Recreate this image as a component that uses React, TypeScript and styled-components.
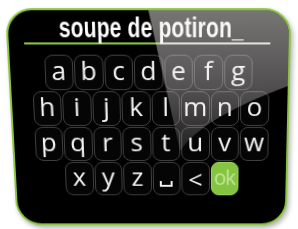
import styled, { createGlobalStyle } from "styled-components";

const GlobalStyle = createGlobalStyle`
  html, body {
    margin: 0;
    padding: 0;
    background: #fff;
    overflow: hidden;
  }
`;

const Stage = styled.div`
  width: 298px;
  height: 229px;
  padding: 10px 0 0 11px;
  box-sizing: border-box;
`;

const Panel = styled.div`
  position: relative;
  width: 278px;
  height: 220px;
  box-sizing: border-box;
  background: #000;
  border: 2px solid #8cc63f;
  border-radius: 26px;
  overflow: hidden;
  box-shadow: 2px 3px 5px rgba(0, 0, 0, 0.3);
  transform: perspective(600px) rotateX(-9.6deg) skewX(0.9deg);
  display: flex;
  flex-direction: column;
`;

const Title = styled.div`
  margin-top: 3.5px;
  height: 26px;
  padding-left: 6px;
  font-family: "Liberation Sans", Arial, sans-serif;
  font-weight: 700;
  font-size: 27px;
  line-height: 26px;
  color: #fff;
  text-align: center;
  white-space: nowrap;
`;

const TitleText = styled.span`
  display: inline-block;
  transform: scaleX(0.76);
  letter-spacing: 0.2px;
`;

const Underline = styled.div`
  margin: 1px 18px 0 15px;
  height: 2px;
  background: linear-gradient(to right, #8cc63f 0 133px, #d6d6d6 133px);
`;

const Keyboard = styled.div`
  margin-top: 10.5px;
  display: flex;
  flex-direction: column;
  gap: 1px;
`;

const Row = styled.div<{ $indent: number }>`
  display: flex;
  gap: 1px;
  padding-left: ${(p) => p.$indent}px;
`;

const Key = styled.div<{ $accent?: boolean; $low?: boolean }>`
  width: 28.5px;
  height: 35px;
  box-sizing: border-box;
  padding-bottom: ${(p) => (p.$low ? 0 : p.$accent ? 3 : 6)}px;
  border: 1.5px solid ${(p) => (p.$accent ? "#9fd45a" : "#404040")};
  border-radius: 8px;
  background: ${(p) => (p.$accent ? "#85c441" : "#050505")};
  color: ${(p) => (p.$accent ? "#c6e69c" : "#f4f4f4")};
  font-family: "Open Sans", "DejaVu Sans", sans-serif;
  font-size: ${(p) => (p.$accent ? 21 : 26)}px;
  letter-spacing: ${(p) => (p.$accent ? -1 : 0)}px;
  line-height: 1;
  display: flex;
  align-items: center;
  justify-content: center;
`;

const SpaceGlyph = styled.svg`
  width: 13px;
  height: 6px;
  margin-top: 16px;
`;

const Gloss = styled.svg`
  position: absolute;
  left: 0;
  top: 0;
  width: 274px;
  height: 216px;
  pointer-events: none;
`;

const rows: { indent: number; keys: string[] }[] = [
  { indent: 33.5, keys: ["a", "b", "c", "d", "e", "f", "g"] },
  { indent: 20.5, keys: ["h", "i", "j", "k", "l", "m", "n", "o"] },
  { indent: 20.5, keys: ["p", "q", "r", "s", "t", "u", "v", "w"] },
  { indent: 50, keys: ["x", "y", "z", "space", "<", "ok"] },
];

export default function App() {
  return (
    <>
      <GlobalStyle />
      <Stage>
        <Panel>
          <Title>
            <TitleText>soupe de potiron_</TitleText>
          </Title>
          <Underline />
          <Keyboard>
            {rows.map((row, i) => (
              <Row key={i} $indent={row.indent}>
                {row.keys.map((k) => (
                  <Key key={k} $accent={k === "ok"} $low={k === "<"}>
                    {k === "space" ? (
                      <SpaceGlyph viewBox="0 0 13 6">
                        <path d="M1 0 V5 H12 V0" fill="none" stroke="#f4f4f4" strokeWidth="2" />
                      </SpaceGlyph>
                    ) : (
                      k
                    )}
                  </Key>
                ))}
              </Row>
            ))}
          </Keyboard>
          <Gloss viewBox="0 0 274 216">
            <defs>
              <linearGradient id="gloss" x1="0" y1="0" x2="0" y2="1">
                <stop offset="0" stopColor="#f4eeee" stopOpacity="0.5" />
                <stop offset="0.55" stopColor="#f4eeee" stopOpacity="0.33" />
                <stop offset="1" stopColor="#f4eeee" stopOpacity="0.12" />
              </linearGradient>
            </defs>
            <path d="M136 -5 L167 140 Q188 106 277 73 L277 -5 Z" fill="url(#gloss)" />
          </Gloss>
        </Panel>
      </Stage>
    </>
  );
}
